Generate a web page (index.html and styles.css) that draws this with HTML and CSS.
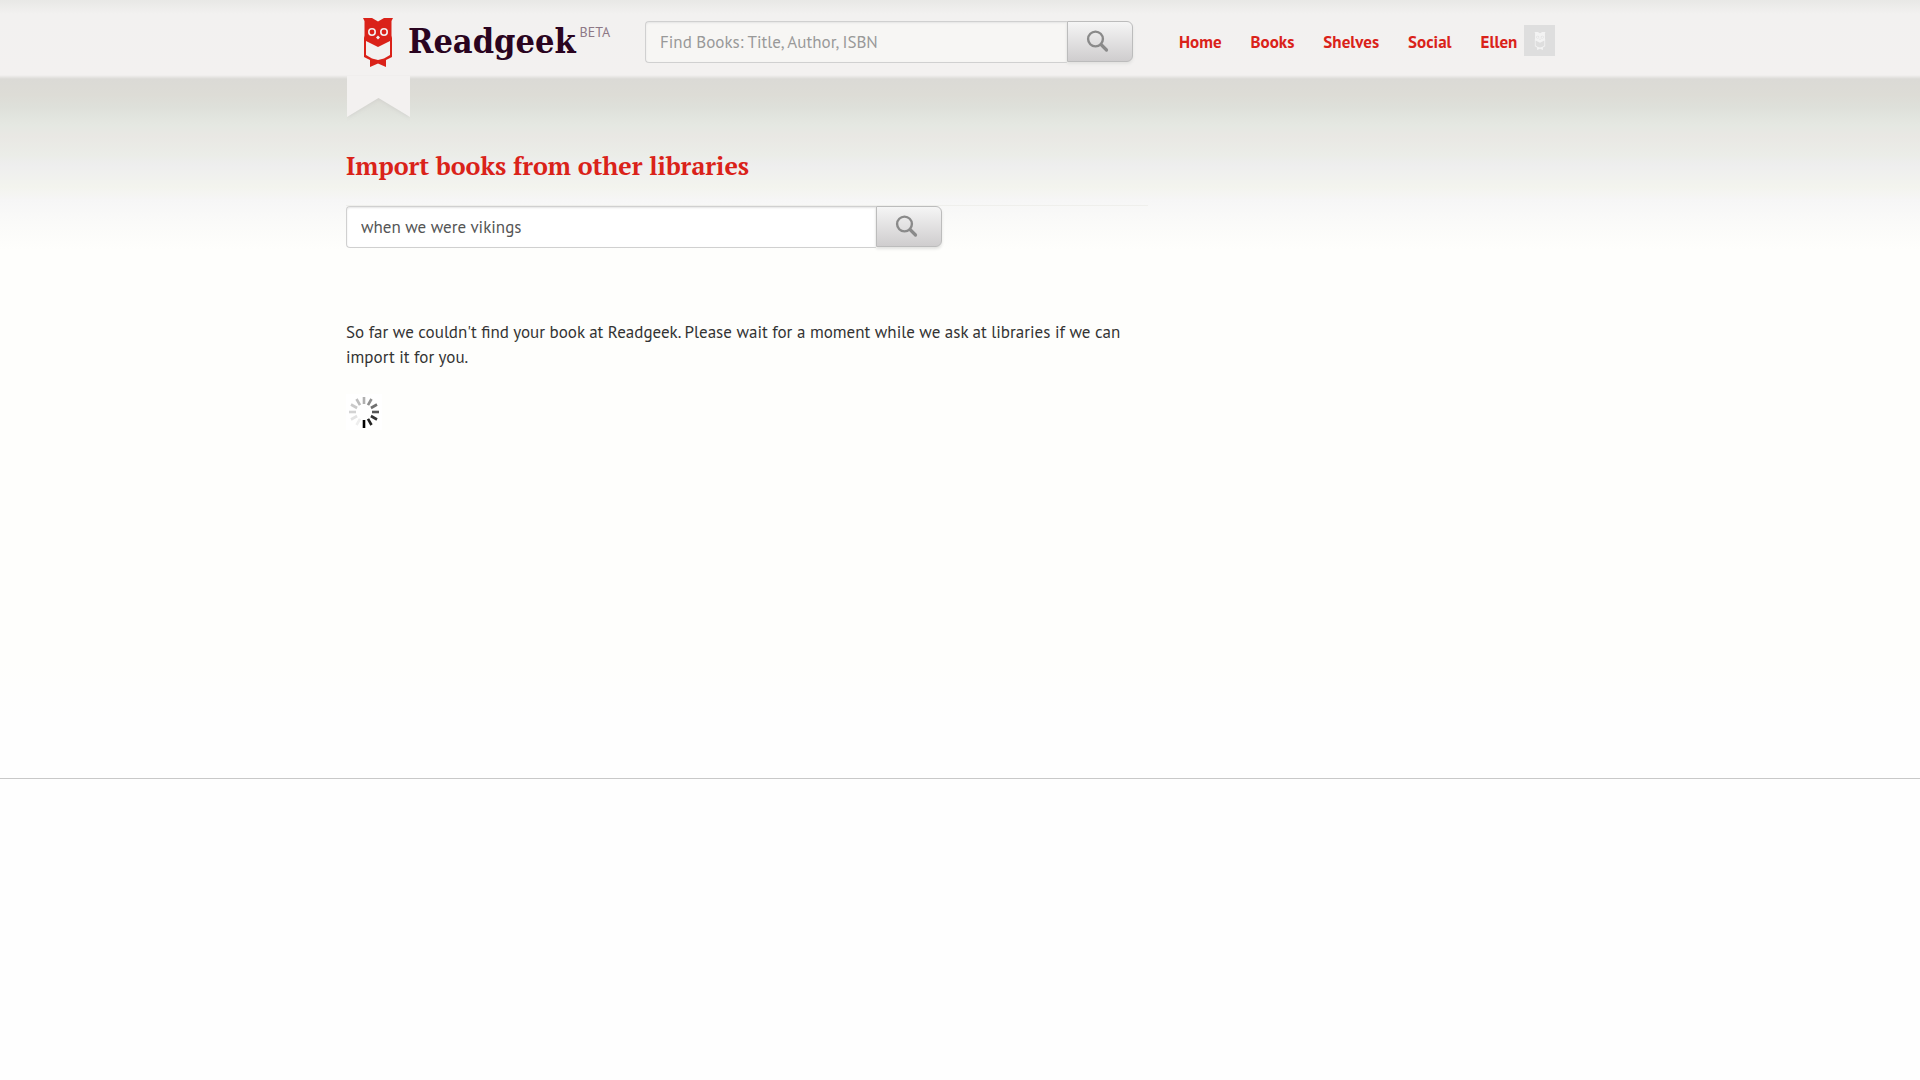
FILE: index.html
```
<!DOCTYPE html>
<html lang="en">
<head>
<meta charset="utf-8">
<title>Readgeek</title>
<link rel="stylesheet" href="styles.css">
</head>
<body>
<svg class="sprite" aria-hidden="true">
  <symbol id="lens" viewBox="0 0 24 24">
    <circle cx="9.500" cy="9" r="7.400" fill="none" stroke="currentColor" stroke-width="2.400"/>
    <path d="M15 14.500 20.500 20" fill="none" stroke="currentColor" stroke-width="3.200" stroke-linecap="round"/>
  </symbol>
  <symbol id="owl" viewBox="0 0 30 49">
    <path fill="currentColor" fill-rule="evenodd" d="M0 0H9L15 3.400 21 0H30L28.500 3V17.500L29 20V39L23 42V49L15 45.500 7 49V42L1 39V20L1.500 17.500V3ZM3 23V37L9 40.500 15 42 21 40.500 27 37V23L15 29ZM5 14A4 4 0 1 0 13 14A4 4 0 1 0 5 14ZM17 14A4 4 0 1 0 25 14A4 4 0 1 0 17 14ZM15 17.500 17 19.500 15 21.500 13 19.500Z"/>
    <circle cx="9" cy="14" r="2.400" fill="currentColor"/>
    <circle cx="21" cy="14" r="2.400" fill="currentColor"/>
  </symbol>
</svg>
<header class="topbar">
  <div class="wrap topbar-row">
    <a class="logo" href="#">
      <svg class="ribbon" viewBox="0 0 63 43" aria-hidden="true"><path d="M0 0H63V42L31.500 23 0 42Z"/></svg>
      <svg class="logo-owl" aria-hidden="true"><use href="#owl"/></svg>
      <span class="logo-name">Readgeek</span>
      <span class="logo-beta">BETA</span>
    </a>
    <form class="search search-top">
      <input class="search-field" type="text" aria-label="Find books" placeholder="Find Books: Title, Author, ISBN">
      <button class="search-button" type="button" aria-label="Search"><svg class="lens"><use href="#lens"/></svg></button>
    </form>
    <nav class="menu">
      <a href="#">Home</a>
      <a href="#">Books</a>
      <a href="#">Shelves</a>
      <a href="#">Social</a>
      <a class="user" href="#">Ellen <span class="avatar"><svg class="avatar-owl" aria-hidden="true"><use href="#owl"/></svg></span></a>
    </nav>
  </div>
</header>
<main class="page">
  <div class="wrap">
    <div class="column">
      <h1>Import books from other libraries</h1>
      <div class="import">
        <form class="search search-import">
          <input class="search-field" type="text" aria-label="Book to import" value="when we were vikings">
          <button class="search-button" type="button" aria-label="Search"><svg class="lens"><use href="#lens"/></svg></button>
        </form>
      </div>
      <p>So far we couldn't find your book at Readgeek. Please wait for a moment while we ask at libraries if we can import it for you.</p>
      <svg class="spinner" viewBox="-18 -18 36 36" role="img" aria-label="Loading">
        <g stroke-width="2.600">
          <path d="M0 8V16" stroke="#000"/>
          <path d="M0 8V15" stroke="#222" transform="rotate(-30)"/>
          <path d="M0 8V15" stroke="#333" transform="rotate(-60)"/>
          <path d="M0 8V15" stroke="#555" transform="rotate(-90)"/>
          <path d="M0 8V15" stroke="#707070" transform="rotate(-120)"/>
          <path d="M0 8V15" stroke="#909090" transform="rotate(-150)"/>
          <path d="M0 8V15" stroke="#b0b0b0" transform="rotate(-180)"/>
          <path d="M0 8V15" stroke="#bdbdbd" transform="rotate(-210)"/>
          <path d="M0 8V15" stroke="#cacaca" transform="rotate(-240)"/>
          <path d="M0 8V15" stroke="#d3d3d3" transform="rotate(-270)"/>
          <path d="M0 8V15" stroke="#e3e3e3" transform="rotate(-300)"/>
          <path d="M0 8V15" stroke="#eee" transform="rotate(-330)"/>
        </g>
      </svg>
    </div>
  </div>
</main>
</body>
</html>
```
FILE: styles.css
```
* { box-sizing: border-box; }
body {
  margin: 0;
  background: #fefefe;
  color: #333;
  font: 17px/25px "PT Sans", Roboto, sans-serif;
}
a { color: #da2219; text-decoration: none; }
.sprite { position: absolute; width: 0; height: 0; }
.wrap { max-width: 1228px; margin: 0 auto; }

.topbar {
  background: linear-gradient(#e8e8e6, #f2f1f0 14px, #f3f1f0 75px, #dbdad6 79px);
}
.topbar-row { display: flex; align-items: flex-start; height: 79px; padding-top: 18px; }

.logo {
  position: relative;
  display: flex;
  flex: 0 0 299px;
  padding-left: 17px;
  color: #2a0420;
}
.ribbon {
  position: absolute;
  top: 57px;
  left: 1px;
  width: 63px;
  height: 43px;
  fill: #f3f1f0;
  filter: drop-shadow(0 0 2px #cccbc8);
  clip-path: inset(1px 0 -3px);
}
.logo-owl { position: relative; width: 30px; height: 49px; margin-right: 15px; color: #da2219; }
.logo-name { font: bold 34px/46px "DejaVu Serif Condensed", "DejaVu Serif", serif; }
.logo-beta { margin-left: 4px; color: #8d7886; font-size: 14px; line-height: 28px; }

.search { display: flex; height: 42px; }
.search-top { flex: 0 0 488px; margin-top: 3px; }
.search-field {
  flex: 1;
  min-width: 0;
  height: 42px;
  padding: 0 14px;
  border: 1px solid #d0d0d0;
  border-right: 0;
  border-radius: 4px 0 0 4px;
  background: #fff;
  box-shadow: inset 0 1px 2px #e4e4e4;
  color: #555;
  font: inherit;
}
.search-top .search-field { background: #f7f6f4; }
.search-field::placeholder { color: #999; opacity: 1; }
.search-button {
  width: 66px;
  height: 41px;
  padding: 0 4px 0 0;
  border: 1px solid #bcbcbc;
  border-radius: 0 6px 6px 0;
  background: linear-gradient(#f5f5f5, #cfcdce);
  box-shadow: 0 2px 3px #e2e2e0;
}
.lens { display: block; width: 24px; height: 24px; margin: 0 auto; color: #8a8a8a; }

.menu { display: flex; gap: 29px; margin-left: 46px; padding-top: 7px; }
.menu a { line-height: 34px; font-weight: bold; }
.user { display: flex; gap: 7px; }
.avatar { display: flex; width: 31px; height: 31px; background: #dedede; }
.avatar-owl { width: 12px; height: 18px; margin: auto; color: #f3f3f3; }

.page {
  min-height: 700px;
  padding-top: 69px;
  border-bottom: 1px solid #c8c8c8;
  background: linear-gradient(#dbdad6, #dddcd6 16px, #dee0da 28px, #e5e8e2 46px, #e9e8e4 58px, #ebede8 76px, #eeeeee 86px, #f3f4ee 108px, #f6f6f6 121px, #f9f9f8 136px, #fefefc 171px, #fefefc 580px, #fefefe 640px);
}
.column { max-width: 802px; }
h1 { margin: 0; color: #da2219; font: bold 25px/36px "PT Serif", "Liberation Serif", serif; }
.import { margin-top: 21px; border-top: 1px solid #efefec; }
.search-import { max-width: 596px; }
p { margin: 72px 0 24px; }
.spinner { display: block; width: 36px; height: 36px; background: #fff; }
```
